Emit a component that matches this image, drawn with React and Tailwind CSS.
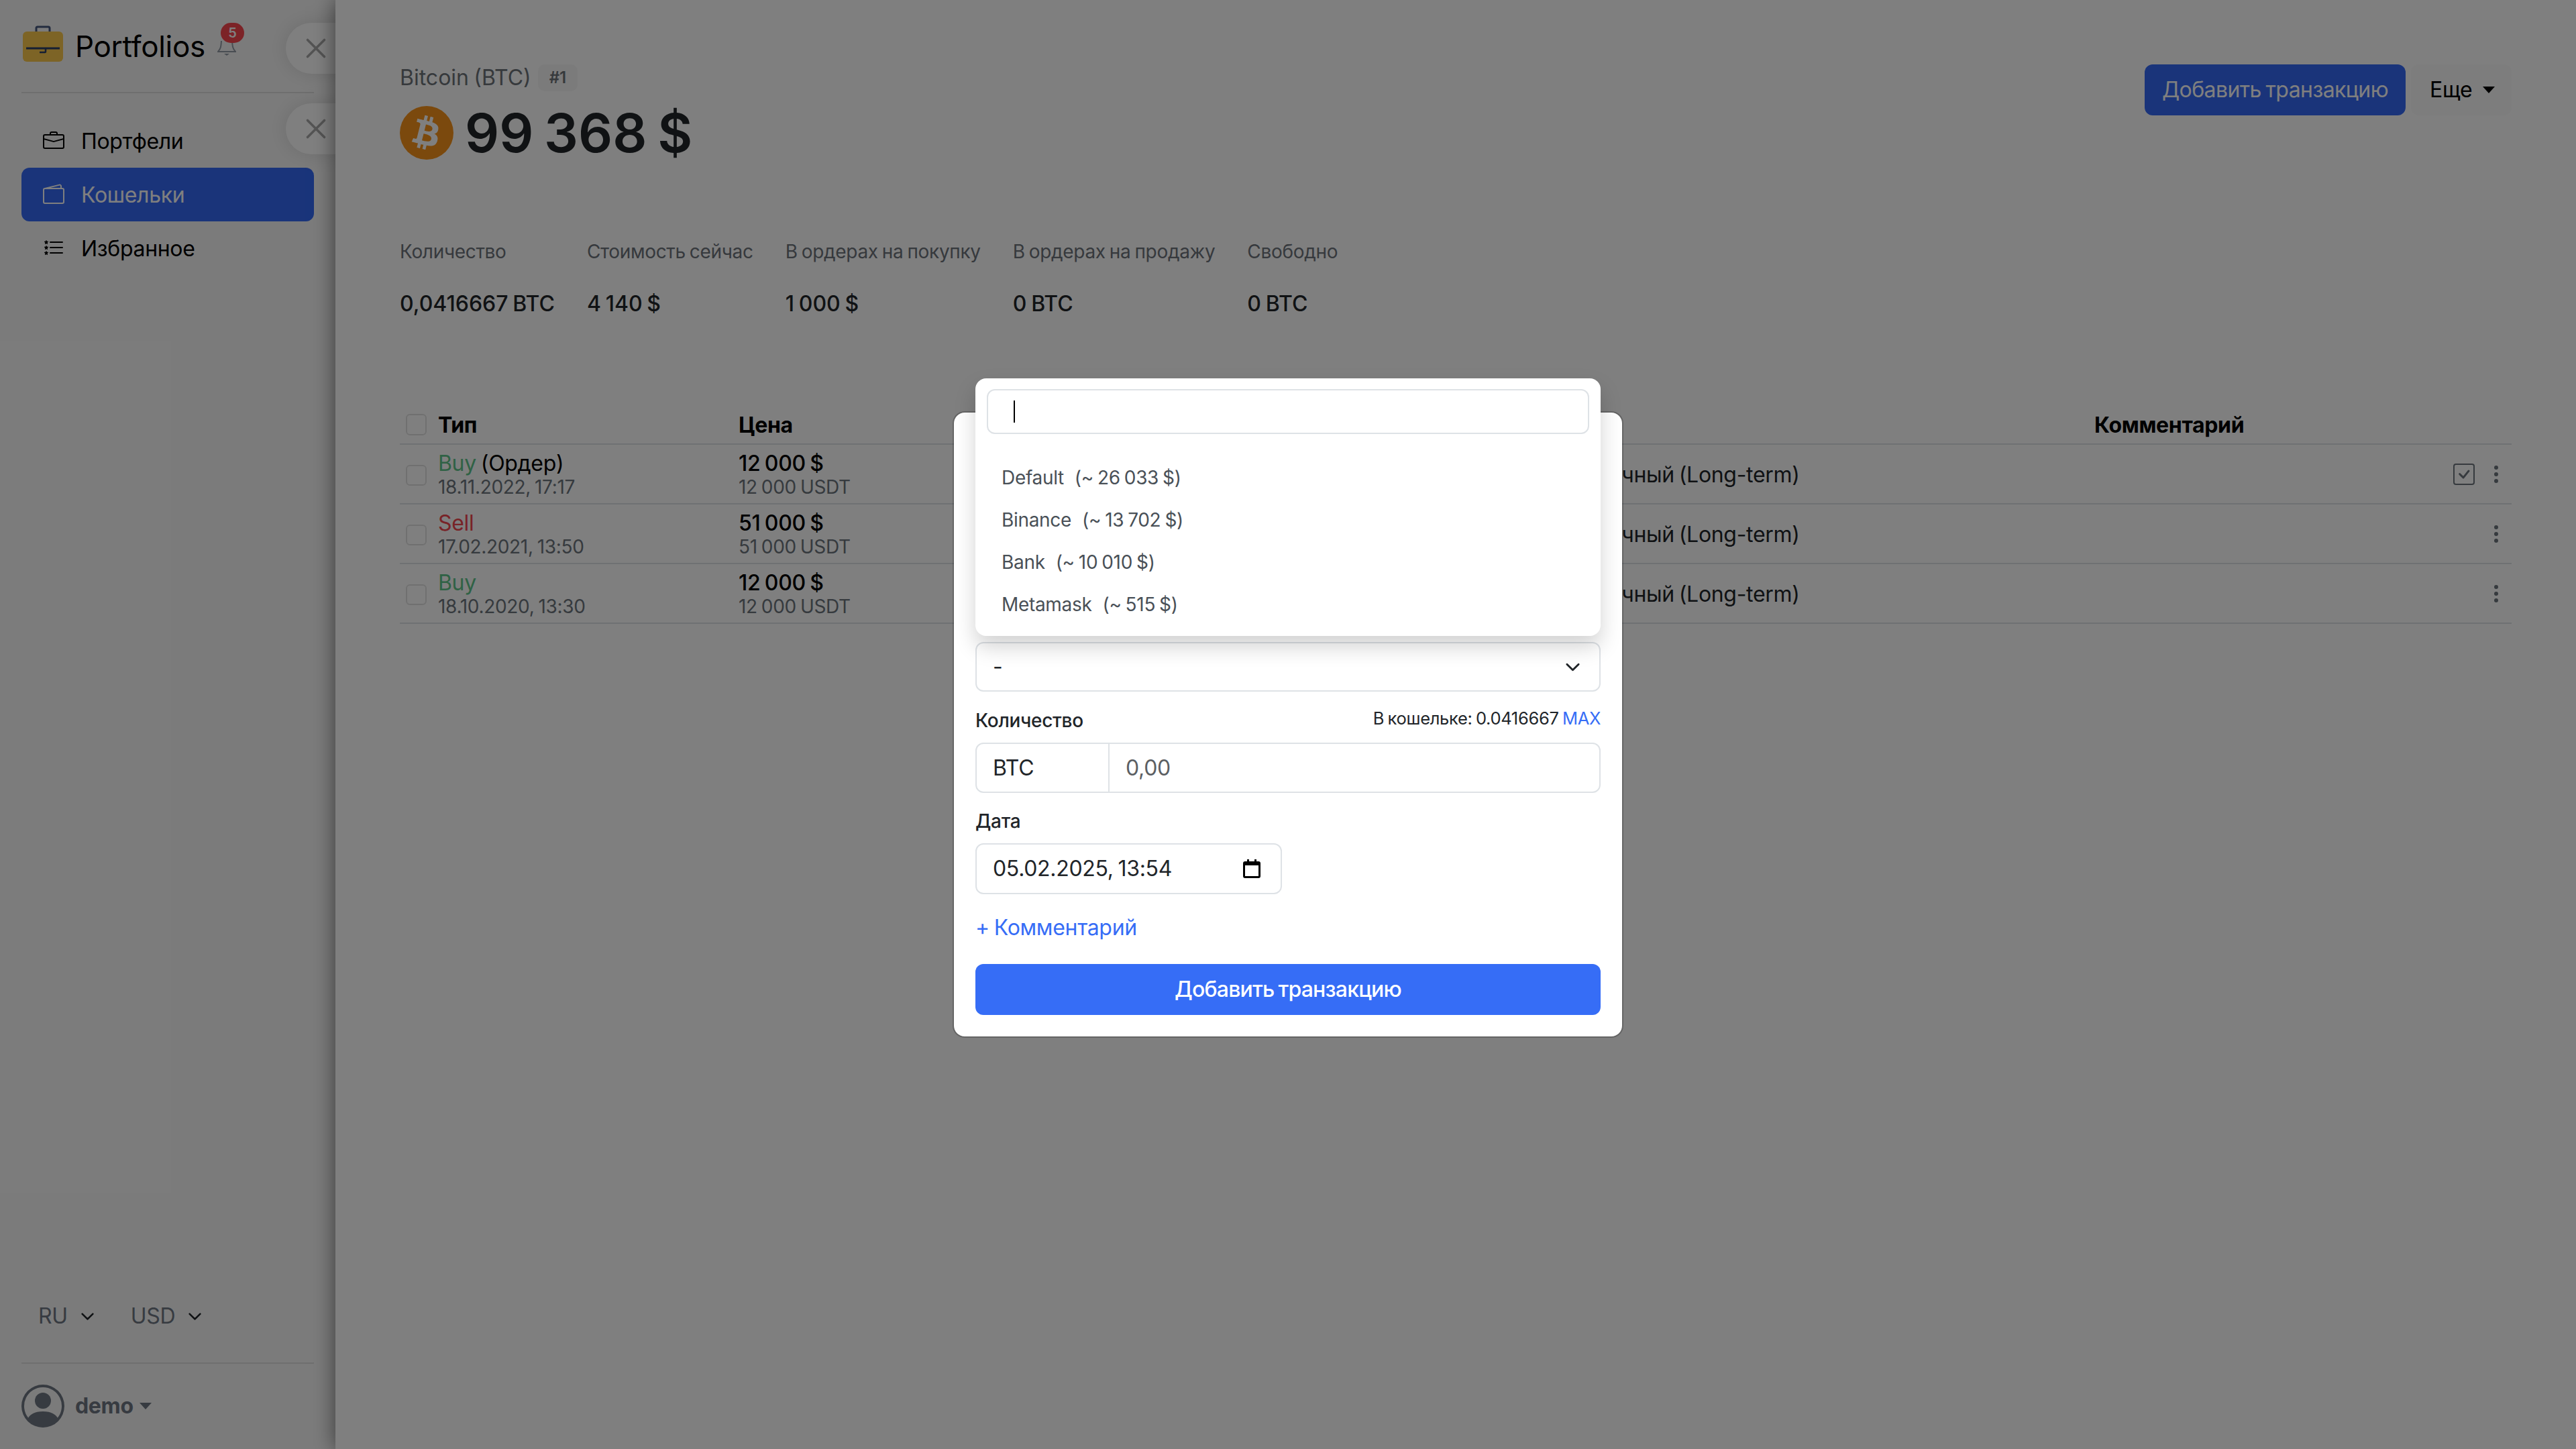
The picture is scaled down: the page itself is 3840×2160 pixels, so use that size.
import React from "react";
import { BsBriefcase, BsWallet2, BsListStars, BsCheckSquare, BsThreeDotsVertical, BsPersonCircle, BsChevronDown } from "react-icons/bs";
import { FaBtc } from "react-icons/fa";
import { X } from "lucide-react";

const Caret = ({ cls }) => <span className={"w-0 h-0 border-x-[9px] border-x-transparent border-t-[10px] " + cls} />;

const Logo = () => (
  <svg width="60" height="54" viewBox="0 0 60 54" className="ml-[2px] -mt-[8px] shrink-0">
    <path d="M20 10V4a2 2 0 0 1 2-2h16a2 2 0 0 1 2 2v6" fill="none" stroke="#46587f" strokeWidth="3" />
    <rect x="0" y="9" width="60" height="45" rx="6" fill="#fac84c" />
    <path d="M5 34H55" stroke="#2c3e66" strokeWidth="3" />
    <path d="M34 34V39a1 1 0 0 1-1 1H25" fill="none" stroke="#2c3e66" strokeWidth="2.5" />
  </svg>
);

const Bell = () => (
  <svg width="28" height="26" viewBox="0 0 28 26" className="absolute left-[324px] top-[57px]">
    <path d="M6 4C5.5 12 5 16 1 20H27C23 16 22.500 12 22 4" fill="none" stroke="#939aa5" strokeWidth="2" />
    <path d="M10 23H18L14 26Z" fill="#939aa5" />
  </svg>
);

const NavItem = ({ icon, label, active }) => (
  <div className={"h-[80px] rounded-[12px] flex items-center pl-[32px] gap-[25px] text-[32px] " + (active ? "bg-[#3469f5] text-white" : "text-black")}>
    <span className="w-[32px] flex justify-center shrink-0">{icon}</span>
    <span className="relative top-[1px]">{label}</span>
  </div>
);

const ClosePill = ({ cls }) => (
  <div className={"absolute left-[426px] w-[90px] h-[76px] rounded-l-full bg-white shadow-[0_0_30px_rgba(0,0,0,0.12)] flex items-center pl-[20px] " + cls}>
    <X size={50} strokeWidth={1.7} color="#a8a8a8" />
  </div>
);

const Sidebar = () => (
  <aside className="relative w-[500px] shrink-0 h-full bg-[#f7f7f7] px-[32px] pb-[32px] flex flex-col">
    <div className="h-[139px] border-b-2 border-[#dedede] flex items-center gap-[18px]">
      <Logo />
      <span className="text-[44px] leading-none text-black">Portfolios</span>
    </div>
    <Bell />
    <div className="absolute left-[329px] top-[34px] w-[35px] h-[30px] rounded-full bg-[#f9464f] text-white text-[20px] font-semibold flex items-center justify-center">5</div>
    <ClosePill cls="top-[34px]" />
    <ClosePill cls="top-[154px]" />
    <nav className="mt-[31px] flex flex-col">
      <NavItem icon={<BsBriefcase size={32} />} label="Портфели" />
      <NavItem active icon={<BsWallet2 size={32} />} label="Кошельки" />
      <NavItem icon={<BsListStars size={32} />} label="Избранное" />
    </nav>
    <div className="mt-auto pl-[25px] h-[40px] flex items-center text-[32px] text-[#6f7783]">
      <span>RU</span>
      <BsChevronDown size={21} color="#212529" strokeWidth={1} className="ml-[19px]" />
      <span className="ml-[54px]">USD</span>
      <BsChevronDown size={21} color="#212529" strokeWidth={1} className="ml-[19px]" />
    </div>
    <div className="mt-[49px] border-t-2 border-[#dedede]" />
    <div className="mt-[31px] h-[64px] flex items-center text-[#6f7783]">
      <BsPersonCircle size={64} />
      <span className="ml-[16px] text-[32px] font-bold">demo</span>
      <Caret cls="ml-[9px] border-t-[#6f7783]" />
    </div>
  </aside>
);

const Stat = ({ label, value }) => (
  <div>
    <div className="h-[40px] leading-[40px] text-[28px] text-[#6c727a]">{label}</div>
    <div className="mt-[38px] h-[40px] leading-[40px] text-[32px] font-medium tracking-[0em] text-[#212529]">{value}</div>
  </div>
);

const gridCols = "grid grid-cols-[57px_448px_1165px_856px_622px] items-center";

const Row = ({ kind, kindCls, extra, date, price, priceSub, check }) => (
  <div className={gridCols + " h-[89px] border-b-2 border-[#dee2e6]"}>
    <div className="pl-[9px]"><div className="w-[31px] h-[31px] rounded-[6px] border-2 border-[#e1e1e1] mt-[3px]" /></div>
    <div>
      <div className="text-[32px] leading-[38px]"><span className={kindCls}>{kind}</span>{extra}</div>
      <div className="text-[28px] leading-[32px] text-[#6c757d]">{date}</div>
    </div>
    <div>
      <div className="text-[32px] leading-[38px] font-medium text-black">{price}</div>
      <div className="text-[28px] leading-[32px] text-[#6c757d]">{priceSub}</div>
    </div>
    <div className="text-[32px] text-[#212529] mt-[3px]">Долгосрочный (Long-term)</div>
    <div className="flex items-center justify-end pr-[7px] gap-[16px] text-[#6c757d]">
      {check && <BsCheckSquare size={32} />}
      <BsThreeDotsVertical size={32} />
    </div>
  </div>
);

const Main = () => (
  <main className="relative z-10 flex-1 h-full bg-white shadow-[0_0_30px_rgba(0,0,0,0.55)] pl-[96px] pr-[96px] pt-[96px] min-w-0">
    <div className="flex justify-between items-start">
      <div>
        <div className="h-[40px] flex items-center gap-[10px]">
          <span className="text-[32px] text-[#6c7278] tracking-[0em]">Bitcoin (BTC)</span>
          <span className="w-[59px] h-[40px] rounded-[10px] bg-[#f7f7f7] text-[24px] font-semibold text-[#6c7278] flex items-center justify-center">#1</span>
        </div>
        <div className="mt-[22px] h-[80px] flex items-center gap-[17px]">
          <div className="w-[80px] h-[80px] rounded-full bg-[#f7931a] flex items-center justify-center">
            <FaBtc size={50} color="#fff" className="rotate-[14deg]" />
          </div>
          <span className="text-[80px] font-semibold text-[#212529] leading-none tracking-[0em]">99 368 $</span>
        </div>
      </div>
      <div className="flex gap-[8px]">
        <div className="w-[389px] h-[76px] rounded-[12px] bg-[#3469f5] text-white text-[32px] tracking-[-0.018em] flex items-center justify-center">Добавить транзакцию</div>
        <div className="w-[150px] h-[76px] rounded-[12px] bg-[#fafafa] text-black text-[32px] flex items-center pl-[28px] gap-[16px]">
          <span>Еще</span>
          <Caret cls="border-t-black" />
        </div>
      </div>
    </div>
    <div className="mt-[117px] flex gap-[48px]">
      <Stat label="Количество" value="0,0416667 BTC" />
      <Stat label="Стоимость сейчас" value="4 140 $" />
      <Stat label="В ордерах на покупку" value="1 000 $" />
      <Stat label="В ордерах на продажу" value="0 BTC" />
      <Stat label="Свободно" value="0 BTC" />
    </div>
    <div className="mt-[133px]">
      <div className={gridCols + " h-[57px] border-b-2 border-[#dee2e6] text-[32px] font-bold text-black"}>
        <div className="pl-[9px]"><div className="w-[31px] h-[32px] rounded-[6px] border-2 border-[#e1e1e1] -mt-[2px]" /></div>
        <div>Тип</div>
        <div>Цена</div>
        <div />
        <div>Комментарий</div>
      </div>
      <Row kind="Buy" kindCls="text-[#5fc48a]" extra=" (Ордер)" date="18.11.2022, 17:17" price="12 000 $" priceSub="12 000 USDT" check />
      <Row kind="Sell" kindCls="text-[#f0464f]" date="17.02.2021, 13:50" price="51 000 $" priceSub="51 000 USDT" />
      <Row kind="Buy" kindCls="text-[#5fc48a]" date="18.10.2020, 13:30" price="12 000 $" priceSub="12 000 USDT" />
    </div>
  </main>
);

const inputBox = "border-2 border-[#dee2e6] rounded-[12px]";

const Dropdown = () => (
  <div className="absolute left-[32px] right-[32px] top-[-51px] h-[384px] bg-white rounded-[16px] shadow-[0_16px_32px_rgba(0,0,0,0.18)] pt-[16px] px-[17px] pb-[16px]">
    <div className={inputBox + " h-[67px] flex items-center pl-[38px]"}>
      <span className="w-[2px] h-[33px] bg-black" />
    </div>
    <div className="mt-[33px] -mx-[17px] pl-[39px] flex flex-col text-[28px] text-[#495057]">
      {[["Default", "26 033"], ["Binance", "13 702"], ["Bank", "10 010"], ["Metamask", "515"]].map(([n, v]) => (
        <div key={n} className="h-[63px] flex items-center gap-[16px]"><span>{n}</span><span>(~ {v} $)</span></div>
      ))}
    </div>
  </div>
);

const Modal = () => (
  <div className="absolute left-[1420px] top-[613px] w-[1000px] h-[934px] bg-white border-2 border-[#00000033] bg-clip-padding rounded-[18px] p-[32px] pt-0">
    <Dropdown />
    <div className="h-[342px]" />
    <div className={inputBox + " h-[74px] flex items-center justify-between pl-[24px] pr-[28px] text-[32px] text-[#212529]"}>
      <span>-</span>
      <BsChevronDown size={23} strokeWidth={1} />
    </div>
    <div className="mt-[21px] h-[40px] flex items-center justify-between">
      <span className="text-[28px] font-medium text-[#212529] relative top-[2px]">Количество</span>
      <span className="text-[25.5px] text-[#212529] relative -top-[1px]">В кошельке: 0.0416667 <span className="text-[#366df6]">MAX</span></span>
    </div>
    <div className={inputBox + " mt-[15px] h-[75px] flex text-[32px]"}>
      <div className="w-[198px] border-r-2 border-[#dee2e6] pl-[24px] flex items-center text-[#212529]">BTC</div>
      <div className="pl-[24px] flex items-center text-[#5c5f63]">0,00</div>
    </div>
    <div className="mt-[22px] h-[40px] flex items-center text-[28px] font-medium text-[#212529]">Дата</div>
    <div className={inputBox + " mt-[13px] w-[457px] h-[76px] flex items-center justify-between pl-[24px] pr-[30px] text-[32px] text-[#212529]"}>
      <span>05.02.2025, 13:54</span>
      <svg width="26" height="28" viewBox="0 0 26 28">
        <path d="M6 0h3v3h8V0h3v3h3a3 3 0 0 1 3 3v19a3 3 0 0 1-3 3H3a3 3 0 0 1-3-3V6a3 3 0 0 1 3-3h3Z" fill="#000" />
        <rect x="3" y="9" width="20" height="16" fill="#fff" />
      </svg>
    </div>
    <div className="mt-[30px] h-[40px] flex items-center text-[32px] text-[#366df6]">+ Комментарий</div>
    <div className="mt-[34px] h-[76px] rounded-[12px] bg-[#366df6] text-white text-[32px] font-medium tracking-[-0.025em] flex items-center justify-center">Добавить транзакцию</div>
  </div>
);

export default function App() {
  return (
    <div className="relative w-[3840px] h-[2160px] overflow-hidden flex font-['Inter',sans-serif] tracking-[-0.02em] [&_*]:[word-spacing:-0.055em]">
      <Sidebar />
      <Main />
      <div className="absolute inset-0 z-20 bg-black/50" />
      <div className="absolute inset-0 z-30">
        <Modal />
      </div>
    </div>
  );
}
